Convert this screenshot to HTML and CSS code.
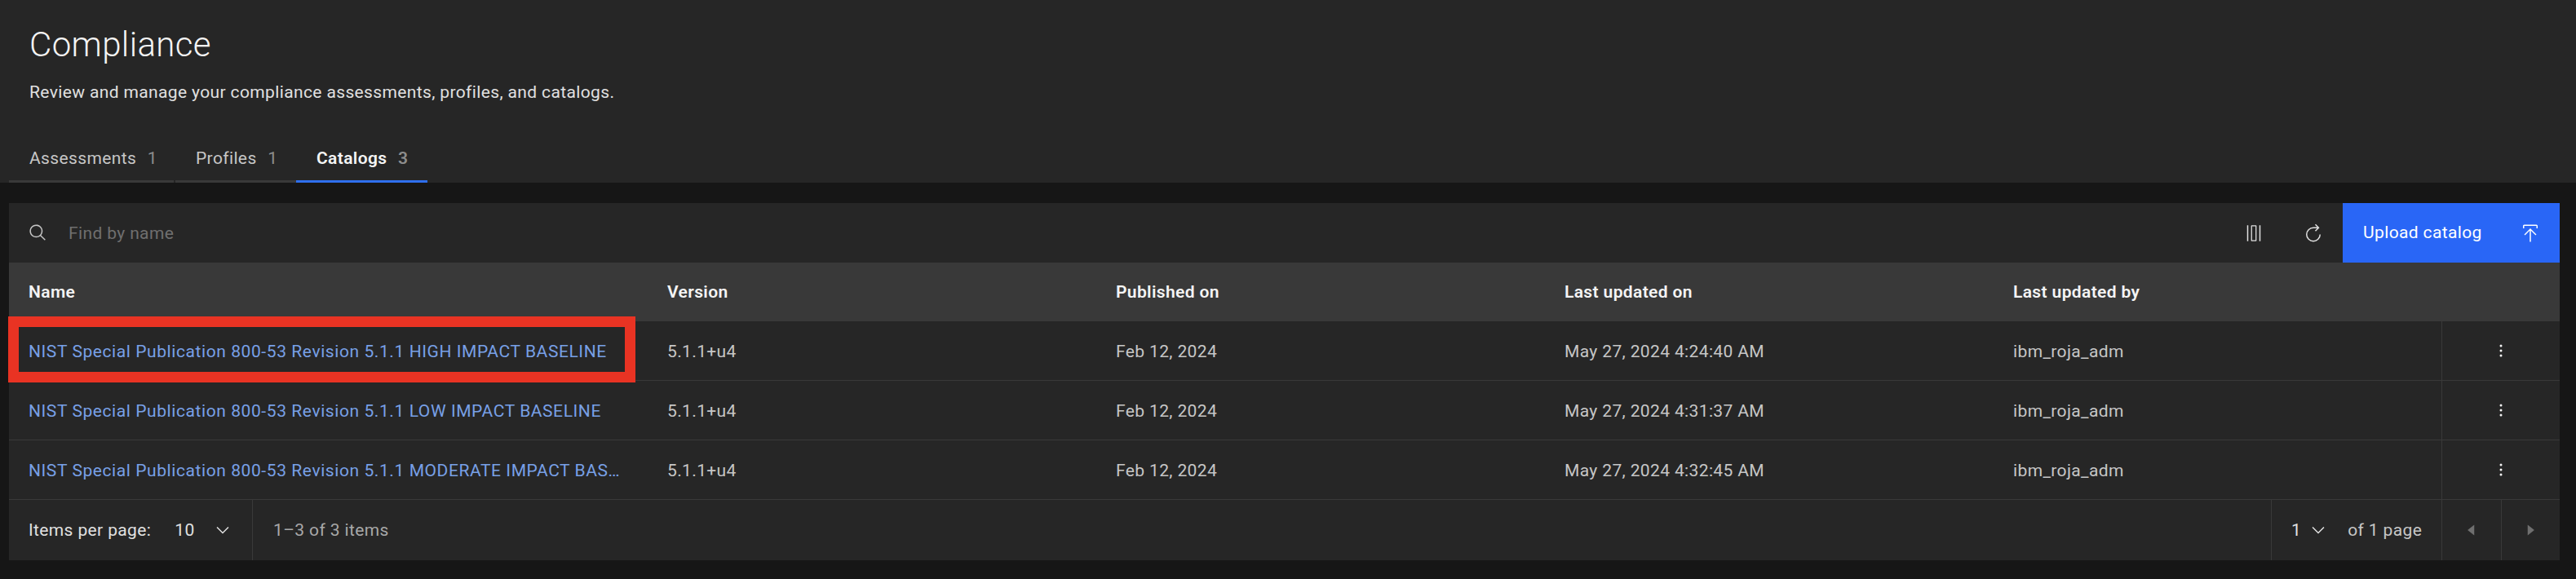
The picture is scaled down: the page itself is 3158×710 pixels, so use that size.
FILE: index.html
```html
<!DOCTYPE html>
<html lang="en">

<head>
    <meta charset="UTF-8">
    <title>Compliance</title>
    <link rel="stylesheet" href="styles.css">
</head>

<body>
    <header class="page-header">
        <h1>Compliance</h1>
        <p class="subtitle">Review and manage your compliance assessments, profiles, and catalogs.</p>
        <nav class="tabs">
            <a class="tab tab-assessments">Assessments <span class="count">1</span></a>
            <a class="tab tab-profiles">Profiles <span class="count">1</span></a>
            <a class="tab tab-catalogs active">Catalogs <span class="count">3</span></a>
        </nav>
    </header>

    <main class="content">
        <section class="panel">
            <div class="toolbar">
                <svg class="icon search-icon" viewBox="0 0 32 32"><path d="M29,27.5859l-7.5521-7.5521a11.0177,11.0177,0,1,0-1.4141,1.4141L27.5859,29ZM4,13a9,9,0,1,1,9,9A9.01,9.01,0,0,1,4,13Z"/></svg>
                <span class="placeholder">Find by name</span>
                <svg class="icon tool-icon columns-icon" viewBox="0 0 32 32"><path d="M5 3h2v26H5zM25 3h2v26h-2zM12.500 3h7a1 1 0 0 1 1 1v24a1 1 0 0 1-1 1h-7a1 1 0 0 1-1-1V4a1 1 0 0 1 1-1zm.7 1.700v22.600h5.600V4.700z"/></svg>
                <svg class="icon tool-icon refresh-icon" viewBox="0 0 32 32"><path d="M26 18A10 10 0 1 1 16 8h6.200l-3.600 3.600L20 13l6-6-6-6-1.400 1.400L22.200 6H16a12 12 0 1 0 12 12z"/></svg>
                <button class="upload-btn">
                    <span>Upload catalog</span>
                    <svg class="icon" viewBox="0 0 32 32"><path d="M6 18l1.410 1.410L15 11.830V30h2V11.830l7.590 7.580L26 18 16 8 6 18zM6 8V4h20v4h2V4a2 2 0 0 0-2-2H6a2 2 0 0 0-2 2v4z"/></svg>
                </button>
            </div>

            <div class="row head">
                <div class="cell">Name</div>
                <div class="cell">Version</div>
                <div class="cell">Published on</div>
                <div class="cell">Last updated on</div>
                <div class="cell">Last updated by</div>
                <div class="cell"></div>
            </div>

            <div class="row highlighted">
                <div class="cell"><a class="name-link">NIST Special Publication 800-53 Revision 5.1.1 HIGH IMPACT BASELINE</a></div>
                <div class="cell">5.1.1+u4</div>
                <div class="cell">Feb 12, 2024</div>
                <div class="cell">May 27, 2024 4:24:40 AM</div>
                <div class="cell">ibm_roja_adm</div>
                <div class="cell action"><svg class="icon menu-icon" viewBox="0 0 32 32"><circle cx="16" cy="8" r="2"/><circle cx="16" cy="16" r="2"/><circle cx="16" cy="24" r="2"/></svg></div>
                <div class="callout"></div>
            </div>
            <div class="row">
                <div class="cell"><a class="name-link">NIST Special Publication 800-53 Revision 5.1.1 LOW IMPACT BASELINE</a></div>
                <div class="cell">5.1.1+u4</div>
                <div class="cell">Feb 12, 2024</div>
                <div class="cell">May 27, 2024 4:31:37 AM</div>
                <div class="cell">ibm_roja_adm</div>
                <div class="cell action"><svg class="icon menu-icon" viewBox="0 0 32 32"><circle cx="16" cy="8" r="2"/><circle cx="16" cy="16" r="2"/><circle cx="16" cy="24" r="2"/></svg></div>
            </div>
            <div class="row">
                <div class="cell"><a class="name-link">NIST Special Publication 800-53 Revision 5.1.1 MODERATE IMPACT BASELINE</a></div>
                <div class="cell">5.1.1+u4</div>
                <div class="cell">Feb 12, 2024</div>
                <div class="cell">May 27, 2024 4:32:45 AM</div>
                <div class="cell">ibm_roja_adm</div>
                <div class="cell action"><svg class="icon menu-icon" viewBox="0 0 32 32"><circle cx="16" cy="8" r="2"/><circle cx="16" cy="16" r="2"/><circle cx="16" cy="24" r="2"/></svg></div>
            </div>

            <footer class="pagination">
                <div class="page-size">
                    <span>Items per page:</span>
                    <span class="size-value">10</span>
                    <svg class="icon chevron" viewBox="0 0 32 32"><path d="M16 22L6 12l1.400-1.400 8.600 8.600 8.600-8.600L26 12z"/></svg>
                </div>
                <div class="range">1–3 of 3 items</div>
                <div class="page-select">
                    <span>1</span>
                    <svg class="icon chevron" viewBox="0 0 32 32"><path d="M16 22L6 12l1.400-1.400 8.600 8.600 8.600-8.600L26 12z"/></svg>
                    <span class="page-total">of 1 page</span>
                </div>
                <div class="page-btn"><svg class="icon caret" viewBox="0 0 32 32"><path d="M20 24L10 16l10-8z"/></svg></div>
                <div class="page-btn"><svg class="icon caret" viewBox="0 0 32 32"><path d="M12 8l10 8-10 8z"/></svg></div>
            </footer>
        </section>
    </main>
</body>

</html>
```

FILE: styles.css
```css
body {
    margin: 0;
    background-color: #161616;
    color: #c6c6c6;
    font-family: "Roboto", "Liberation Sans", sans-serif;
    font-size: 21px;
    letter-spacing: 0.37px;
}

.icon {
    fill: currentColor;
    display: block;
    flex-shrink: 0;
}

.page-header {
    height: 224px;
    box-sizing: border-box;
    background-color: #262626;
    padding-top: 35px;
}

h1 {
    margin: 0 0 0 36px;
    font-size: 42px;
    line-height: 40px;
    font-weight: 300;
    color: #f4f4f4;
}

.subtitle {
    margin: 23px 0 0 36px;
    line-height: 30px;
    color: #e0e0e0;
}

.tabs {
    display: flex;
    margin: 36px 0 0 11px;
}

.tab {
    box-sizing: border-box;
    height: 60px;
    padding: 15px 0 0 25px;
    line-height: 30px;
    border-bottom: 3px solid #393939;
    color: #c6c6c6;
}

.tab-assessments {
    width: 202px;
    margin-right: 2px;
}

.tab-profiles {
    width: 148px;
}

.tab-catalogs {
    width: 161px;
}

.tab .count {
    margin-left: 8px;
    color: #8d8d8d;
}

.tab.active {
    color: #f4f4f4;
    font-weight: 600;
    border-bottom-color: #2f6fed;
}

.content {
    padding: 25px 20px 23px 11px;
}

.panel {
    background-color: #262626;
}

.toolbar {
    display: flex;
    align-items: center;
    height: 73px;
}

.search-icon {
    width: 23px;
    height: 23px;
    margin-left: 24px;
    color: #c6c6c6;
}

.placeholder {
    margin-left: 26px;
    color: #6f6f6f;
}

.tool-icon {
    width: 24px;
    height: 24px;
    color: #e0e0e0;
}

.columns-icon {
    margin-left: auto;
}

.refresh-icon {
    margin-left: 49px;
    margin-right: 24px;
}

.upload-btn {
    display: flex;
    align-items: center;
    justify-content: space-between;
    width: 266px;
    height: 73px;
    padding: 0 24px 0 25px;
    border: none;
    background-color: #2966f6;
    color: #fff;
    font-family: inherit;
    font-size: 21px;
    letter-spacing: 0.37px;
}

.upload-btn span {
    margin-bottom: 2px;
}

.upload-btn .icon {
    width: 24px;
    height: 24px;
}

.row {
    position: relative;
    display: grid;
    grid-template-columns: 783px 550px 550px 550px 549px 1fr;
    height: 73px;
    border-bottom: 1px solid #393939;
    box-sizing: border-box;
    align-items: stretch;
}

.row.head {
    height: 72px;
    background-color: #393939;
    color: #f4f4f4;
    font-weight: 600;
    border-bottom: none;
}

.cell {
    display: flex;
    align-items: center;
    padding: 2px 24px 0;
    min-width: 0;
}

.head .cell {
    padding-top: 0;
}

.name-link {
    color: #78a0e6;
    letter-spacing: 0.58px;
    white-space: nowrap;
    overflow: hidden;
    text-overflow: ellipsis;
}

.action {
    justify-content: center;
    border-left: 1px solid #393939;
    padding: 0;
    color: #f4f4f4;
}

.menu-icon {
    width: 24px;
    height: 24px;
}

/* red annotation drawn over the first row */
.callout {
    position: absolute;
    left: -1px;
    top: -6px;
    width: 769px;
    height: 81px;
    box-sizing: border-box;
    border: 13px solid #e93323;
}

.pagination {
    display: flex;
    height: 74px;
    align-items: stretch;
}

.page-size {
    display: flex;
    align-items: center;
    width: 299px;
    box-sizing: border-box;
    padding-left: 24px;
    border-right: 1px solid #393939;
    color: #e0e0e0;
}

.size-value {
    margin-left: 29px;
}

.chevron {
    width: 24px;
    height: 24px;
    color: #e0e0e0;
}

.page-size .chevron {
    margin-left: 22px;
}

.range {
    display: flex;
    align-items: center;
    padding-left: 25px;
    width: 2475px;
    box-sizing: border-box;
    color: #a8a8a8;
    border-right: 1px solid #393939;
}

.page-select {
    display: flex;
    align-items: center;
    width: 208px;
    box-sizing: border-box;
    padding-left: 24px;
    color: #e0e0e0;
}

.page-select .chevron {
    margin-left: 9px;
}

.page-total {
    margin-left: 24px;
    color: #c6c6c6;
}

.page-btn {
    display: flex;
    align-items: center;
    justify-content: center;
    flex: 1;
    border-left: 1px solid #393939;
    color: #6f6f6f;
}

.caret {
    width: 26px;
    height: 26px;
}
```
